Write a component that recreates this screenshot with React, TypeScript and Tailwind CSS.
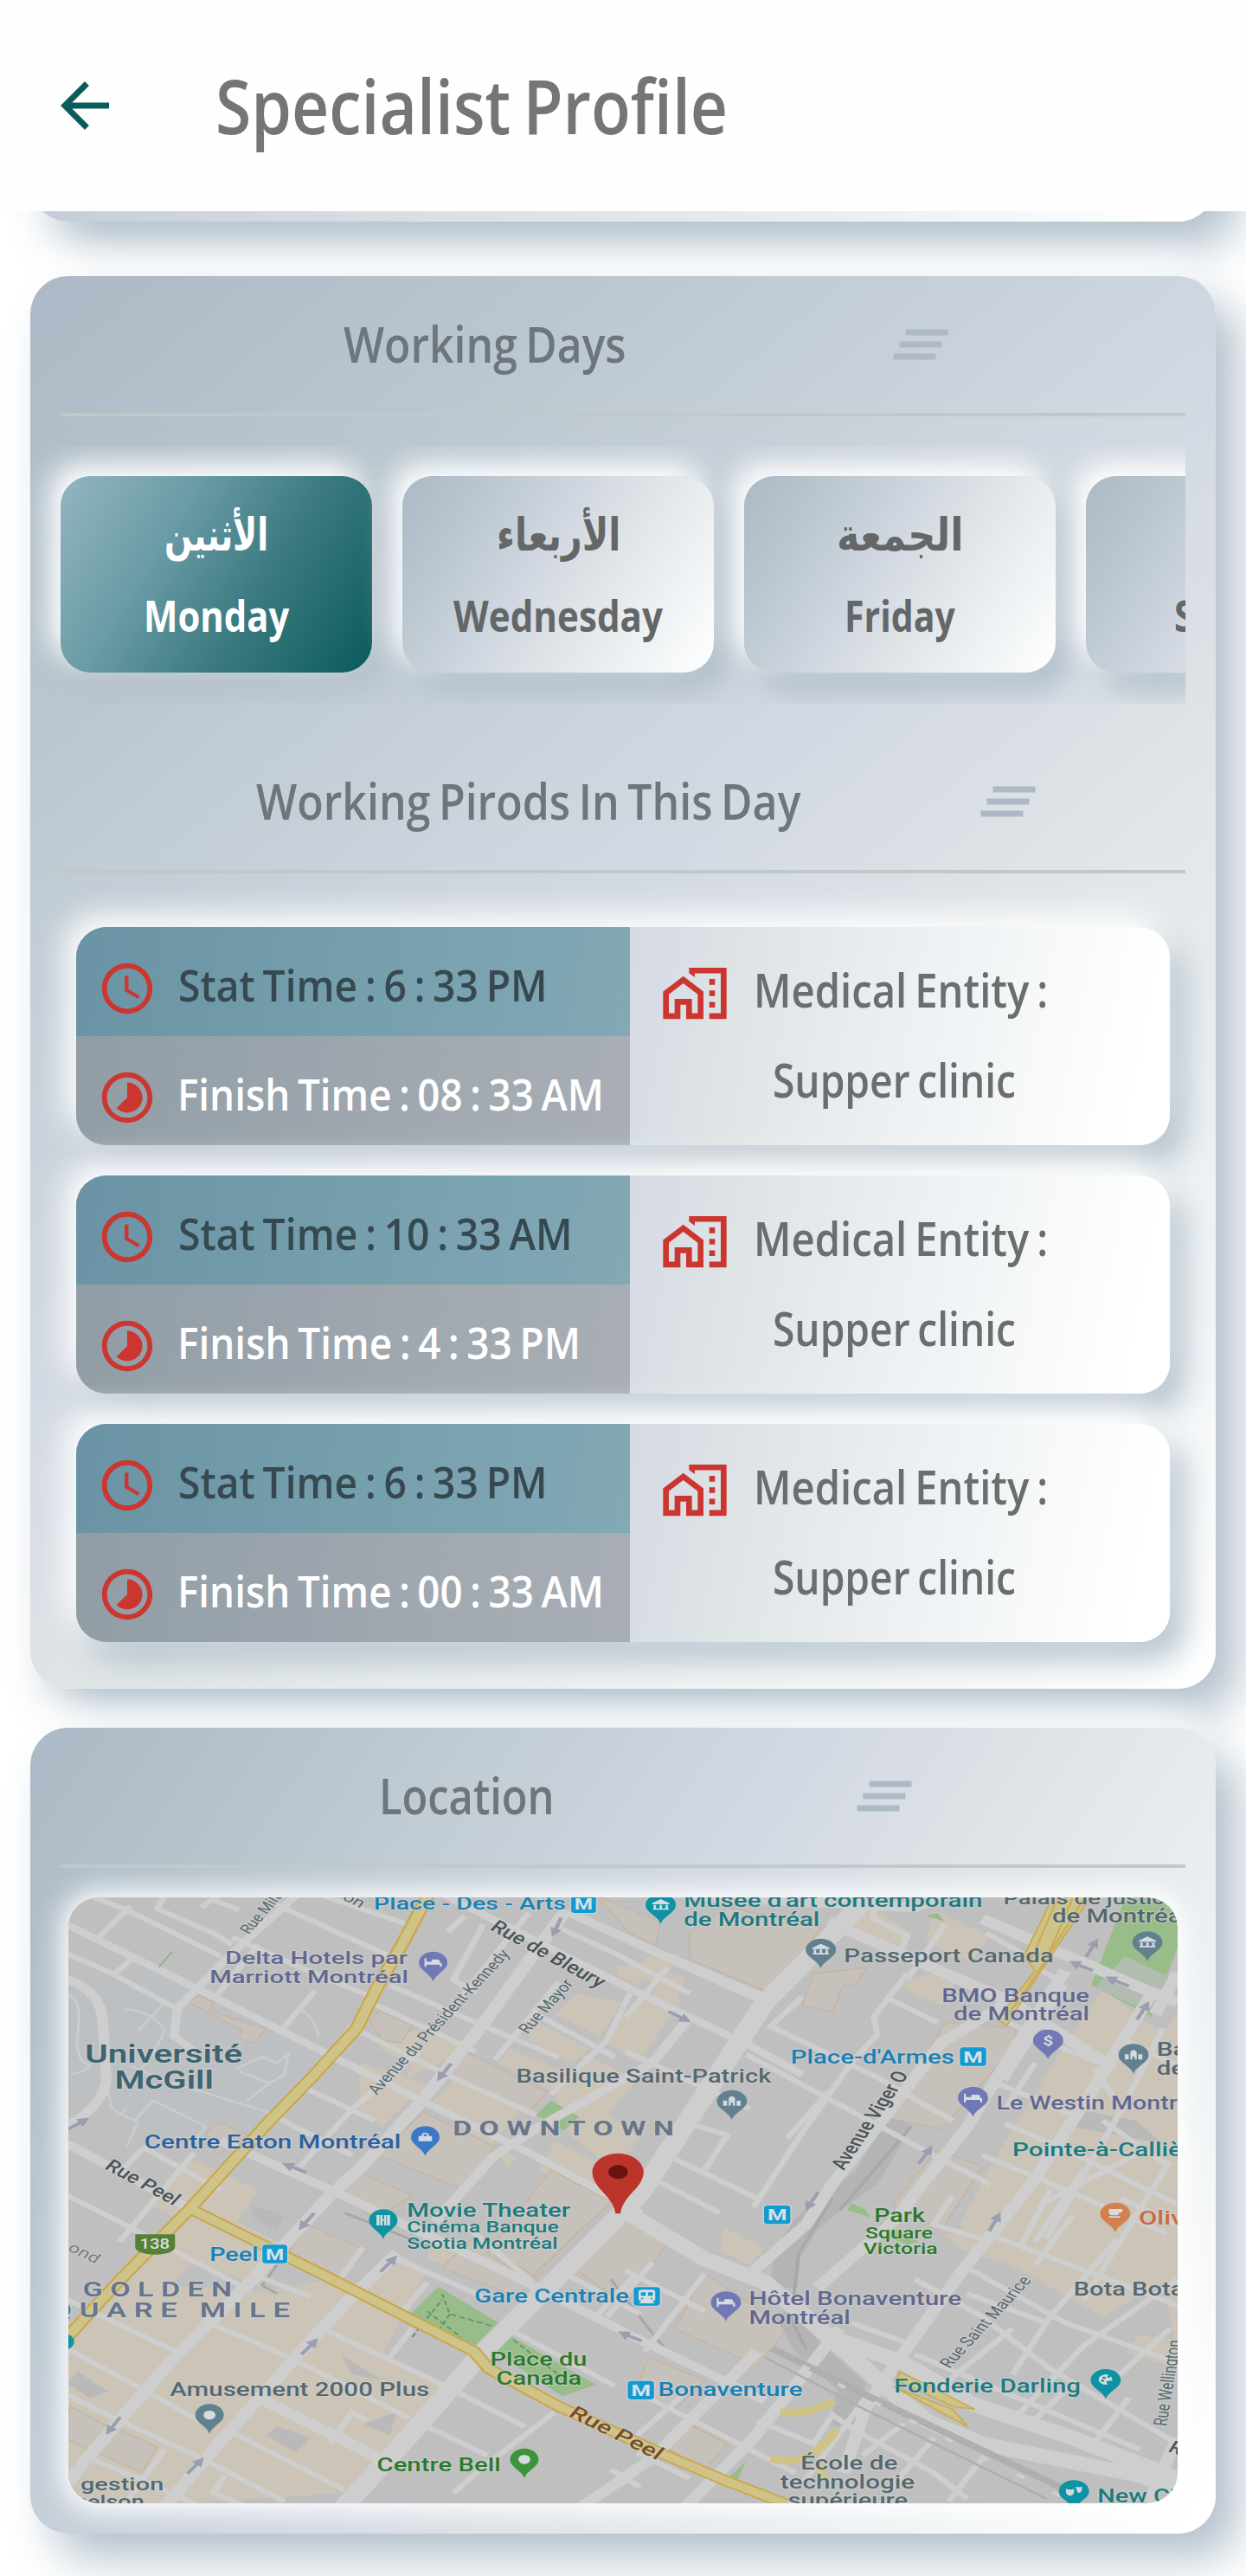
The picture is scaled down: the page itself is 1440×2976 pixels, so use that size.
import { useLayoutEffect, useRef, useState, type ReactNode } from "react";
import { MdAccessTime, MdArrowBack, MdClearAll, MdTimelapse } from "react-icons/md";

/** One line of text, condensed or widened to fill its box. */
function Fit({ className = "", children, rtl = false }: { className?: string; children: ReactNode; rtl?: boolean }) {
  const box = useRef<HTMLDivElement>(null);
  const text = useRef<HTMLSpanElement>(null);
  const [scale, setScale] = useState(1);
  useLayoutEffect(() => {
    const measure = () => {
      if (box.current && text.current) setScale(box.current.clientWidth / text.current.offsetWidth);
    };
    measure();
    document.fonts?.ready.then(measure);
  }, []);
  return (
    <div ref={box} className={"shrink-0 flex justify-start leading-none whitespace-nowrap [word-spacing:-0.07em] " + className}>
      <span ref={text} dir={rtl ? "rtl" : "ltr"} className="inline-block shrink-0 origin-left" style={{ transform: `scaleX(${scale})` }}>
        {children}
      </span>
    </div>
  );
}

function SectionHeader({ title, width, gap, pad }: { title: string; width: string; gap: string; pad: string }) {
  return (
    <div>
      <div className={"flex h-[158px] items-center " + pad}>
        <Fit className={"-mt-[2px] text-[57px] font-semibold text-[#6d757d] " + width}>{title}</Fit>
        <MdClearAll className={"size-[84px] shrink-0 text-[#adbac6] " + gap} />
      </div>
      <div className="h-[4px] bg-[#bfc9c8]" />
    </div>
  );
}

const days = [
  { ar: "الأثنين", en: "Monday", arW: "w-[120px]", enW: "w-[168px]", active: true },
  { ar: "الأربعاء", en: "Wednesday", arW: "w-[143px]", enW: "w-[242px]" },
  { ar: "الجمعة", en: "Friday", arW: "w-[147px]", enW: "w-[128px]" },
  { ar: "الأحد", en: "Sunday", arW: "w-[90px]", enW: "w-[156px]" },
];

function DayCard({ d }: { d: (typeof days)[number] }) {
  return (
    <div
      className={
        "flex h-[227px] w-[360px] shrink-0 flex-col items-center rounded-[35px] pt-[37px] " +
        (d.active
          ? "bg-[linear-gradient(122deg,#93b6bf_0%,#6a9ba6_33%,#3b7a80_62%,#0a5a5a_100%)] text-white shadow-[-12px_-14px_32px_#ffffff,16px_20px_36px_rgba(172,185,198,0.7)]"
          : "bg-[linear-gradient(122deg,#acb9c6_0%,#b8c5ce_18%,#c8d1da_35%,#d6dbe4_49%,#dfe4e6_60%,#edf1f3_78%,#ffffff_100%)] text-[#646668] shadow-[-12px_-14px_32px_#ffffff,16px_20px_36px_#aebdc8]")
      }
    >
      <Fit rtl className={"h-[62px] items-center font-['DejaVu_Sans',sans-serif] text-[52px] font-bold " + d.arW}>{d.ar}</Fit>
      <Fit className={"mt-[37px] text-[50px] font-bold " + d.enW}>{d.en}</Fit>
    </div>
  );
}

function HomeWork() {
  return (
    <svg viewBox="0 0 24 24" preserveAspectRatio="none" className="ml-[2px] h-[79px] w-[80px] shrink-0" fill="#cb3730">
      <path d="M1 11.4v9.6h6v-5h2v5h6v-9.6L8 6l-7 5.4zm12 7.6h-2v-5H5v5H3v-6.6l5-3.9 5 3.9v6.6z" />
      <path d="M10 3v1.97l2 1.43V5h9v14h-4v2h6V3H10z" />
      <path d="M17 7h2v2h-2zm0 4h2v2h-2zm0 4h2v2h-2z" />
    </svg>
  );
}

const periods = [
  { start: "6 : 33 PM", sw: "w-[427px]", finish: "08 : 33 AM", fw: "w-[493px]" },
  { start: "10 : 33 AM", sw: "w-[456px]", finish: "4 : 33 PM", fw: "w-[466px]" },
  { start: "6 : 33 PM", sw: "w-[427px]", finish: "00 : 33 AM", fw: "w-[493px]" },
];

function PeriodCard({ p }: { p: (typeof periods)[number] }) {
  return (
    <div className="rounded-[35px] shadow-[-12px_-14px_36px_#ffffff,16px_20px_36px_#b3c0cc]">
      <div className="flex h-[252px] overflow-hidden rounded-[35px] bg-[linear-gradient(101.3deg,#acb9c6_0%,#c8d1da_35%,#d7dce5_51%,#dfe4e6_60%,#edf1f3_76%,#ffffff_96%)]">
        <div className="w-[640px]">
          <div className="flex h-[126px] items-center bg-[linear-gradient(98deg,#6a94a5_0%,#749eac_45%,#83a8b6_100%)] pl-[24px] pt-[16px]">
            <MdAccessTime className="size-[70px] shrink-0 text-[#cb3730]" />
            <Fit className={"-mt-[8px] ml-[24px] text-[50px] font-semibold text-[#374950] " + p.sw}>Stat Time : {p.start}</Fit>
          </div>
          <div className="flex h-[126px] items-center bg-[linear-gradient(98deg,#919da5_0%,#9ca5ad_45%,#a9aeb6_100%)] pl-[24px] pt-[16px]">
            <MdTimelapse className="size-[70px] shrink-0 text-[#cb3730]" />
            <Fit className={"-mt-[8px] ml-[23px] text-[50px] font-semibold text-white " + p.fw}>Finish Time : {p.finish}</Fit>
          </div>
        </div>
        <div className="flex-1 pl-[33px] pt-[37px] text-[54px] font-semibold text-[#6b6d6e]">
          <div className="flex">
            <HomeWork />
            <Fit className="ml-[28px] mt-[8px] w-[340px]">Medical Entity :</Fit>
          </div>
          <Fit className="ml-[132px] mt-[33px] w-[281px]">Supper clinic</Fit>
        </div>
      </div>
    </div>
  );
}

type L = { x: number; y: number; w: number; s: number; c: string; t: string; r?: number; b?: number };
function Labels({ items }: { items: L[] }) {
  return (
    <>
      {items.map((l, i) => (
        <text
          key={i}
          x={l.x}
          y={l.y}
          fontSize={l.s}
          textLength={l.w}
          lengthAdjust="spacingAndGlyphs"
          fill={l.c}
          fontWeight={l.b ?? 500}
          stroke="#d0d0d0"
          strokeWidth={7}
          strokeOpacity={0.55}
          paintOrder="stroke"
          transform={l.r ? `rotate(${l.r} ${l.x} ${l.y})` : undefined}
        >
          {l.t}
        </text>
      ))}
    </>
  );
}

function Pin({ x, y, c, kind = "dot" }: { x: number; y: number; c: string; kind?: string }) {
  return (
    <g transform={`translate(${x} ${y})`}>
      <path d="M0 66C-6 38-38 28-38 0A38 38 0 0 1 38 0C38 28 6 38 0 66Z" fill={c} />
      <g fill="#d4dcdf" stroke="none">
        {kind === "dot" && <circle r="16" />}
        {kind === "bed" && <path d="M-23-15h5v16h36v-6q0-6-6-6h-16v8h-14v18h-5zM-23 1h46v14h-5V7h-36v8h-5z" />}
        {kind === "museum" && <path d="M-22-6L0-20 22-6v4h-44zM-18 0h6v12h-6zM-3 0h6v12h-6zM12 0h6v12h-6zM-20 12h40v5h-40z" />}
        {kind === "church" && <path d="M-22-2h10v18h-10zM-8-10q8-14 16 0v26h-5V6h-6v10h-5zM12-2h10v18H12z" />}
        {kind === "bag" && <path d="M-18-4h36v18h-36zM-10-4a10 12 0 0 1 20 0h-5a5 7 0 0 0-10 0z" />}
        {kind === "film" && <path d="M-18-18h8v36h-8zM10-18h8v36h-8zM-8-18h6v36h-6zM2-18h6v36H2zM-8-2h16v4H-8z" />}
        {kind === "cup" && <path d="M-16-16h34v12H10q0 10-8 10h-8q-10 0-10-10zM-16 9h28v5h-28z" />}
        {kind === "palette" && <path fillRule="evenodd" d="M0-20a20 18 0 1 0 4 36l-2-12 14-2a20 18 0 0 0-16-22zM-8-8a4 4 0 1 1 0 .1zM4-12a4 4 0 1 1 0 .1zM-12 2a4 4 0 1 1 0 .1z" />}
        {kind === "mask" && <path d="M-20-8q10 6 20 0 2 24-10 24T-20-8zM4-16q8 4 16 0 2 22-10 22z" />}
      </g>
      {kind === "bank" && (
        <text textAnchor="middle" y="16" fontSize="46" fontWeight="700" fill="#d4dcdf">$</text>
      )}
    </g>
  );
}

function Metro({ x, y, train = false }: { x: number; y: number; train?: boolean }) {
  return (
    <g transform={`translate(${x} ${y})`}>
      <rect x="-4" y="-4" width="74" height="72" rx="12" fill="#d2d2d2" opacity="0.7" />
      <rect width="66" height="64" rx="9" fill="#129ad3" />
      {train ? (
        <path fillRule="evenodd" fill="#d8e0e4" d="M20 9h26q8 0 8 8v24q0 6-7 7l6 8H13l6-8q-7-1-7-7V17q0-8 8-8zM18 18v12h12V18zM36 18v12h12V18zM18 37v5h6v-5zM42 37v5h6v-5z" />
      ) : (
        <text x="33" y="52" fontSize="56" fontWeight="700" textAnchor="middle" fill="#d8e0e4">M</text>
      )}
    </g>
  );
}

function Arrow({ x, y, r }: { x: number; y: number; r: number }) {
  return <path transform={`translate(${x} ${y}) rotate(${r})`} d="M-36-5H4V-16L36 0 4 16V5H-36Z" fill="#9b9eb0" />;
}

const slate = "#55686f";
const violet = "#61688f";
const teal = "#1c7b80";
const blue = "#1981b4";
const forest = "#2b7a2a";
const park = "#99bd8a";
const tan = "#cbc4b7";
const rose = "#c7c1bb";

/** Two yellow highways: casing below, fill above. */
const highways = "M1010 40L935 225 870 370 812 520 700 680 570 855 368 1145 190 1380 20 1620M368 1145L740 1385 1125 1640 1165 1700 1350 1830 1610 1985 1790 2085 1960 2170";

function MontrealMap() {
  return (
    <svg viewBox="43.8 66 2956.3 2100" preserveAspectRatio="none" className="block h-[700px] w-[1282px] rounded-[35px]" fontFamily="Roboto, sans-serif">
      <rect x="0" y="0" width="3050" height="2200" fill="#bfbfbf" />
      <path d="M40 390L330 300 740 612 600 830 480 920 240 870 40 730Z" fill="#bcc0c3" />

      {/* commercial areas */}
      <g fill={tan}>
        <path d="M870 590L960 640 940 700 1060 620 1090 580 980 520ZM820 640L930 680 1010 720 960 760 880 860 820 800ZM1080 690L1250 800 1170 930 1010 780ZM1340 470L1460 550 1520 430 1400 400 1360 450ZM1280 490L1430 590 1390 640 1270 560ZM1470 560L1568 400 1680 420 1560 640ZM1220 590L1420 700 1380 770 1190 640ZM1340 760L1420 610 1560 700 1480 820 1568 900 1500 1010 1380 890ZM1500 300L1568 300 1568 370 1510 340Z" />
        <path d="M1340 910L1500 1010 1430 1110 1300 1010ZM1190 940L1240 970 1210 1010ZM370 970L550 1080 470 1240 380 1200 250 1130Z" />
        <path d="M400 1130L620 1270 560 1420 500 1390 380 1330 300 1430 200 1400ZM200 1400L560 1430 740 1390 930 1530 880 1650 1040 1760 890 1980 780 2130 0 2200 0 1600Z" />
        <path d="M940 1310L1000 1360 940 1500 830 1440ZM1010 1220L1150 1310 1080 1350 1000 1320Z" />
        <path d="M1600 260L1680 260 1620 370 1530 330ZM1640 330L1690 340 1640 490 1570 460ZM2130 160L2190 100 2290 190 2240 250ZM2350 110L2500 200 2450 290 2330 220ZM2340 330L2410 360 2370 440 2250 370Z" />
        <path d="M2800 380L2960 540 3000 460 3000 1640 2960 1400 2800 1520 2500 1300 2420 1200 2500 1000 2640 700Z" />
        <path d="M1790 1210L1900 1280 1860 1340 1780 1290ZM2380 1240L2520 1150 2640 1290 2600 1360 2430 1290ZM2900 1580L2999 1600 2999 1700 2860 1640Z" />
      </g>
      <g fill={rose} stroke="#c8b3a0" strokeWidth="4">
        <path d="M390 405L430 430 420 460 570 520 540 570 500 555 505 525 365 430Z" />
        <path d="M870 460L960 510 930 570 880 560 850 500ZM1100 600L1320 740 1270 810 1060 680ZM990 810L1180 930 1100 1080 870 960ZM820 1020L960 1100 860 1180 770 1090ZM450 845L520 890 440 960 410 880Z" />
        <path d="M1450 60L1620 150 1610 230 1540 190ZM1700 190L1800 100 2050 170 1920 400 1700 280ZM2030 330L2170 310 2140 370 2110 370 2080 460 2000 440Z" />
        <path d="M2380 500L2570 520 2560 590 2370 870 2230 830ZM2360 940L2480 1000 2370 1220 2240 1130Z" />
        <path d="M680 1200L840 1290 760 1390 630 1300ZM1120 1250L1290 1380 1240 1450 1040 1350ZM1540 1180L1640 1260 1530 1480 1380 1340ZM1330 1010L1490 1120 1270 1390 1160 1300ZM1740 1370L1960 1560 1880 1690 1660 1560ZM1590 1660L1740 1740 1660 1840 1560 1760ZM180 1910L280 1970 240 2060 120 1990ZM50 1830L150 1900 100 1980 20 1930ZM1680 1880L1800 1960 1740 2050 1620 1960Z" />
      </g>
      <g fill="#b9b9b9">
        <path d="M600 1900L690 1940 650 1990 570 1930ZM830 1890L920 1850 900 1930ZM70 1710L150 1780 100 1800 40 1750ZM770 1650L880 1740 800 1720ZM530 1130L620 1170 600 1220 540 1180ZM2730 800L2890 840 2960 920 2720 860Z" />
      </g>
      <g fill={park}>
        <path d="M1290 820L1330 770 1405 825 1365 875ZM1030 1415L1190 1540 1125 1625 955 1510ZM1220 1585L1450 1755 1360 1795 1180 1640ZM2330 130L2380 150 2360 120ZM2860 70H3000V240L2930 480 2770 370ZM2130 1125L2170 1150 2180 1175 2120 1150ZM2210 1190L2310 1260 2280 1270 2200 1230ZM1800 2080L1850 2020 1830 2080Z" />
      </g>
      <path d="M2860 270L2990 350 2920 460 2780 380Z" fill="#b3bcb0" />
      <path d="M960 1590L1040 1460M1000 1500L1090 1590M1040 1440L1060 1510 1170 1550M1060 1510L1030 1570M1230 1600L1350 1720" stroke="#61956a" strokeWidth="5" strokeDasharray="16 9" fill="none" />

      {/* railway yards */}
      <g fill="none" stroke="#b4b4b4">
        <path d="M2260 840L2170 1040 2080 1120 2010 1200 1960 1300 1950 1420M1960 1500L2010 1620 2130 1760 2110 1900" strokeWidth="72" />
        <path d="M2290 860L2100 1150M2080 1110L1990 1300 1970 1530 2010 1630M1490 1390L1590 1560 1640 1640M780 1160L860 1200 1010 1280M600 1340L560 1410 600 1440" strokeWidth="8" stroke="#a7a7a7" />
      </g>

      {/* minor streets */}
      <g fill="none" stroke="#cecece" strokeWidth="17">
        <path d="M100 60L200 110 450 270M210 95L120 210M300 60L280 105 430 190 480 230M400 100L440 60M420 70L500 110M580 80L900 270M480 205L700 330 860 415M700 50L960 165M740 610L850 430 1130 600M900 370L1130 500 1350 620M820 530L1050 680 1290 820M680 730L860 840M600 830L800 960M1150 160L1070 350 1130 400M1100 130L1055 185M1350 360L1180 630M1270 120L1030 510M980 600L800 800 660 1000M1350 170L1500 260 1700 400M1290 470L1500 620M1540 400L1480 560 1330 750M40 260L160 330 330 450M220 270L160 340M700 390L610 530M550 230L430 420M40 1100L120 1150 500 1410M240 930L450 1080M380 950L180 1260M240 940L180 1020" />
        <path d="M1640 310L1530 480M1530 600L1860 800M1650 270L1920 420M2190 60L2190 140 2280 200 2250 290M2380 160L2280 350M2280 330L2190 480 2200 540 2130 640 1990 900 1870 1140M2220 410L2360 500M2000 410L1910 520M1910 510L2200 690 2400 840M1850 610L2350 960 2500 1060M2070 740L1960 900M1700 850L1800 890 1740 1010M1640 960L1880 1110M1600 1040L1780 1160M2490 190L2600 270M2620 310L2680 350M2520 480L2640 560 2830 660M2500 700L2720 820M2620 640L2540 800M2700 370L2540 700M2780 660L2830 760M2860 560L3000 650M2960 520L2860 780 2650 1250M2540 850L2700 940 3000 1130M2480 960L2650 1050 2970 1230M2800 840L2980 1000M2750 1010L2620 1260M2900 950L2650 1120M2980 980L2750 1460M2850 1110L3000 1200" />
        <path d="M830 1280L760 1400M920 1320L1150 1450M1100 1200L1280 1400M1000 1400L930 1510M960 1560L900 1660M550 1380L690 1450M720 1560L1050 1760M400 1530L650 1670 950 1870M40 1460L330 1640M40 1630L240 1770 420 1900M40 1790L180 1880 400 2010 620 2160M480 1920L780 2120M100 2010L230 2080 400 2180M1000 1900L1160 2000M1080 1780L1260 1900M1230 1570L1500 1760M1340 1850L1160 2030 1070 2130M840 1880L800 1850 740 1960M300 1980L200 2160M460 2070L430 2130 560 2200M1340 1350L1568 1510M1550 1380L1450 1520M1490 2050L1568 2110" />
        <path d="M1600 1330L1480 1520M1530 1360L1740 1500M1740 1370L1580 1640M1640 1640L1900 1810M1700 1770L1560 1930M1590 1800L1830 1960 1980 2060M1560 1990L1700 2080M1880 1880L2030 1960 2080 1860 2150 1920M2150 1920L2350 2060 2440 2150M2180 1780L2000 2100M2350 1940L2230 2120M2480 2010L2390 2160M2270 1890L2160 2000M2300 1390L2480 1520 2660 1700 3000 1960M2130 1540L2300 1620M2300 1650L2500 1760 2900 1980M2440 1350L2700 1540 3000 1680M2510 1240L3000 1480M2720 1170L2620 1340M2840 1250L2660 1520 2560 1720M3000 1390L2750 1620 2560 1880M2660 1080L2580 1280M2720 1750L2600 1900M2870 1800L2760 1990M2980 1560L2820 1750M2440 1440L2650 1540M2390 1740L2560 1560M2400 1100L2350 1200 2480 1250" />
      </g>
      <g fill="none" stroke="#cbcbcb" strokeWidth="7">
        <path d="M195 455Q260 455 300 525 290 570 240 660M300 430L230 530M490 660L560 620 600 640 630 610 620 680 580 710 500 670M590 700L520 770M150 740L160 800 220 840 270 770 410 860 370 930M210 650L300 700 600 820M660 450Q710 500 710 550M40 400Q80 420 70 520T90 640 50 680M200 800L180 820M230 840L200 930" />
      </g>

      {/* principal streets */}
      <g fill="none" stroke="#cecece" strokeLinejoin="round">
        <path d="M40 160L380 378 740 612 1000 780 1270 950 1570 1160M650 60L480 260 335 450 325 545 380 600M1050 60L1568 400 1860 580 2000 680" strokeWidth="24" />
        <path d="M40 350Q130 390 135 490L145 690Q145 780 40 860M40 920L368 1145M450 910L760 1090 1250 1390 1568 1600 1900 1810M1380 120L1600 250 1890 420M1700 480L1600 640 1300 860 1180 960 1020 1190" strokeWidth="28" />
        <path d="M1370 110L1140 520 980 780 825 1000 740 1100 520 1410 320 1670 100 2000 10 2150M920 1300L800 1450 720 1560 540 1820 430 1980 300 2180M550 1800L890 2020M2380 60L2300 100 1700 60M2070 150L2400 340 2560 430 2830 660M2480 140L2920 390 3000 430" strokeWidth="36" />
        <path d="M2180 60L2090 180 1900 430 1810 610 1650 930 1570 1090 1350 1380 1150 1640 940 1950 770 2190" strokeWidth="56" />
        <path d="M2700 320L2580 560 2440 860 2320 1060 2250 1180 2040 1420M2560 420L2370 570 2200 860 2080 1060 2010 1200 1870 1360M2940 380L2760 760 2610 1060 2420 1370 2250 1680 2170 1830 2110 2060M3000 330L2940 470M2100 1560L1870 1940 1680 2190M1880 1640L1600 2010 1400 2190M2999 1940L2930 2140 2940 2190" strokeWidth="34" />
        <path d="M1522 1150L1740 1320 1900 1400 2090 1610 2220 1760 2330 1880 2480 1960 2900 2070 3010 2120M2100 1600L2270 1680 2450 1820 2720 1940 3000 2080" strokeWidth="50" />
      </g>
      <g fill="none" stroke="#adafb1">
        <path d="M1920 1630L2200 1810 2720 2130" strokeWidth="22" />
        <path d="M1900 1660L2150 1830 2650 2150" strokeWidth="8" />
        <path d="M2000 1690L2700 2150" stroke="#cecece" strokeWidth="12" strokeDasharray="22 92" />
      </g>
      <path d={highways} fill="none" stroke="#c9a74c" strokeWidth="38" />
      <path d={highways} fill="none" stroke="#cfc387" strokeWidth="27" />
      <g fill="#cfc387" stroke="#c9ab53" strokeWidth="5">
        <path d="M2670 60H2770L2600 390 2545 510 2520 490 2620 320 2590 270Z" />
        <path d="M2680 70L2610 280M2720 70L2640 310M2750 70L2640 300 2540 490" fill="none" />
        <path d="M2260 1710L2460 1840 2400 1830 2250 1740ZM2240 1760L2400 1840 2440 1900Z" />
      </g>
      <path d="M1940 1850Q2020 1860 2085 1810M2090 1910Q2020 2050 1915 2010M2040 2020L2060 2090" fill="none" stroke="#cfc387" strokeWidth="26" />
      <path d="M320 255L285 308" stroke="#86ad7e" strokeWidth="4" />

      {/* one-way arrows */}
      <Arrow x={1345} y={170} r={110} />
      <Arrow x={1045} y={672} r={122} />
      <Arrow x={645} y={1003} r={207} />
      <Arrow x={70} y={850} r={-35} />
      <Arrow x={678} y={1190} r={125} />
      <Arrow x={898} y={1335} r={-52} />
      <Arrow x={687} y={1622} r={-52} />
      <Arrow x={163} y={1898} r={122} />
      <Arrow x={383} y={2035} r={-52} />
      <Arrow x={1540} y={1587} r={207} />
      <Arrow x={1673} y={480} r={32} />
      <Arrow x={2772} y={240} r={-63} />
      <Arrow x={2742} y={303} r={207} />
      <Arrow x={2838} y={357} r={207} />
      <Arrow x={2908} y={458} r={-63} />
      <Arrow x={2328} y={958} r={-60} />
      <Arrow x={2025} y={1120} r={118} />
      <Arrow x={2513} y={1190} r={-65} />

      <Labels
        items={[
          { x: 525, y: 196, w: 205, s: 46, c: slate, t: "Rue Milton", r: -56, b: 400 },
          { x: 772, y: 72, w: 60, s: 46, c: slate, t: "on", r: 32, b: 400 },
          { x: 858, y: 108, w: 512, s: 62, c: blue, t: "Place - Des - Arts" },
          { x: 462, y: 298, w: 486, s: 63, c: violet, t: "Delta Hotels par" },
          { x: 420, y: 362, w: 530, s: 63, c: violet, t: "Marriott Montréal" },
          { x: 88, y: 638, w: 420, s: 86, c: "#3e6470", t: "Université", b: 600 },
          { x: 167, y: 729, w: 264, s: 86, c: "#3e6470", t: "McGill", b: 600 },
          { x: 866, y: 752, w: 605, s: 48, c: slate, t: "Avenue du Président-Kennedy", r: -54, b: 400 },
          { x: 1165, y: 176, w: 358, s: 60, c: "#4b5457", t: "Rue de Bleury", r: 35 },
          { x: 1268, y: 541, w: 215, s: 48, c: slate, t: "Rue Mayor", r: -55, b: 400 },
          { x: 1237, y: 708, w: 680, s: 65, c: slate, t: "Basilique Saint-Patrick" },
          { x: 246, y: 936, w: 684, s: 64, c: "#2c619e", t: "Centre Eaton Montréal" },
          { x: 1068, y: 892, w: 590, s: 74, c: "#6b7587", t: "D\u00a0O\u00a0W\u00a0N\u00a0T\u00a0O\u00a0W\u00a0N", b: 700 },
          { x: 138, y: 1004, w: 228, s: 58, c: "#4b5457", t: "Rue Peel", r: 35 },
          { x: 946, y: 1172, w: 436, s: 66, c: teal, t: "Movie Theater" },
          { x: 946, y: 1228, w: 405, s: 56, c: teal, t: "Cinéma Banque" },
          { x: 946, y: 1284, w: 402, s: 56, c: teal, t: "Scotia Montréal" },
          { x: 420, y: 1325, w: 130, s: 64, c: blue, t: "Peel" },
          { x: 40, y: 1288, w: 90, s: 48, c: "#777d80", t: "ond", r: 32, b: 400 },
          { x: 82, y: 1448, w: 398, s: 74, c: "#66758c", t: "G\u00a0O\u00a0L\u00a0D\u00a0E\u00a0N", b: 600 },
          { x: -2, y: 1522, w: 636, s: 74, c: "#66758c", t: "Q\u00a0U\u00a0A\u00a0R\u00a0E\u00a0\u00a0\u00a0M\u00a0I\u00a0L\u00a0E", b: 600 },
          { x: 1126, y: 1470, w: 412, s: 65, c: blue, t: "Gare Centrale" },
          { x: 1168, y: 1690, w: 258, s: 66, c: forest, t: "Place du" },
          { x: 1184, y: 1756, w: 228, s: 66, c: forest, t: "Canada" },
          { x: 314, y: 1795, w: 692, s: 64, c: slate, t: "Amusement 2000 Plus" },
          { x: 1374, y: 1862, w: 285, s: 62, c: "#785020", t: "Rue Peel", r: 33 },
          { x: 866, y: 2055, w: 330, s: 66, c: forest, t: "Centre Bell" },
          { x: 76, y: 2120, w: 222, s: 62, c: slate, t: "gestion" },
          { x: 60, y: 2182, w: 186, s: 62, c: slate, t: "nelson" },
        ]}
      />
      <Metro x={1384} y={56} />
      <Pin x={1016} y={292} c="#7078b6" kind="bed" />
      <Pin x={995} y={897} c="#3b79c8" kind="bag" />
      <Pin x={883} y={1185} c="#0e93a4" kind="film" />
      <Pin x={420} y={1860} c="#62818f" />
      <Pin x={1259} y={2014} c="#3d953b" />
      <circle cx="30" cy="1606" r="29" fill="#0e93a4" />
      <path d="M222 1234H328V1280Q322 1302 275 1304 228 1302 222 1280Z" fill="#558136" />
      <text x="234" y="1285" fontSize="47" fontWeight="500" textLength="80" lengthAdjust="spacingAndGlyphs" fill="#dedede">138</text>
      <Metro x={561} y={1270} />

      {/* eastern half */}
      <g transform="translate(1522 0) scale(1.0588 1)">
        <Labels
          items={[
            { x: 153, y: 98, w: 752, s: 64, c: teal, t: "Musée d'art contemporain" },
            { x: 153, y: 164, w: 342, s: 64, c: teal, t: "de Montréal" },
            { x: 957, y: 90, w: 438, s: 62, c: slate, t: "Palais de justice" },
            { x: 1080, y: 153, w: 342, s: 64, c: slate, t: "de Montréal" },
            { x: 556, y: 290, w: 528, s: 66, c: slate, t: "Passeport Canada" },
            { x: 802, y: 428, w: 372, s: 65, c: violet, t: "BMO Banque" },
            { x: 832, y: 493, w: 342, s: 65, c: violet, t: "de Montréal" },
            { x: 422, y: 642, w: 412, s: 65, c: blue, t: "Place-d'Armes" },
            { x: 556, y: 1014, w: 372, s: 56, c: "#4b5457", t: "Avenue Viger O", r: -64 },
            { x: 940, y: 802, w: 538, s: 65, c: violet, t: "Le Westin Montréal" },
            { x: 980, y: 962, w: 484, s: 65, c: teal, t: "Pointe-à-Callière" },
            { x: 1343, y: 616, w: 220, s: 64, c: slate, t: "Banque" },
            { x: 1343, y: 682, w: 342, s: 64, c: slate, t: "de Montréal" },
            { x: 632, y: 1108 + 1, w: 1, s: 1, c: forest, t: "" },
            { x: 632, y: 1190, w: 128, s: 66, c: forest, t: "Park" },
            { x: 610, y: 1248, w: 170, s: 56, c: forest, t: "Square" },
            { x: 605, y: 1303, w: 187, s: 56, c: forest, t: "Victoria" },
            { x: 1298, y: 1200, w: 150, s: 65, c: "#c96b41", t: "Olive" },
            { x: 1134, y: 1446, w: 278, s: 66, c: slate, t: "Bota Bota" },
            { x: 317, y: 1480, w: 535, s: 65, c: violet, t: "Hôtel Bonaventure" },
            { x: 317, y: 1545, w: 255, s: 65, c: violet, t: "Montréal" },
            { x: 822, y: 1700, w: 370, s: 48, c: slate, t: "Rue Saint Maurice", r: -56, b: 400 },
            { x: 1368, y: 1900, w: 300, s: 48, c: slate, t: "Rue Wellington", r: -83, b: 400 },
            { x: 88, y: 1795, w: 364, s: 65, c: blue, t: "Bonaventure" },
            { x: 682, y: 1781, w: 470, s: 65, c: teal, t: "Fonderie Darling" },
            { x: 447, y: 2050, w: 244, s: 66, c: slate, t: "École de" },
            { x: 396, y: 2115, w: 338, s: 66, c: slate, t: "technologie" },
            { x: 415, y: 2178, w: 302, s: 66, c: slate, t: "supérieure" },
            { x: 1194, y: 2162, w: 250, s: 64, c: teal, t: "New City" },
            { x: 1370, y: 1985, w: 60, s: 58, c: "#4b5457", t: "Ru", r: 25 },
          ].filter((l) => l.t)}
        />
        <Pin x={95} y={92} c="#0e93a4" kind="museum" />
        <Pin x={498} y={247} c="#62818f" kind="museum" />
        <Pin x={1320} y={222} c="#62818f" kind="museum" />
        <Pin x={1070} y={562} c="#7078b6" kind="bank" />
        <Pin x={1285} y={612} c="#62818f" kind="church" />
        <Pin x={274} y={772} c="#62818f" kind="church" />
        <Pin x={881} y={761} c="#7078b6" kind="bed" />
        <Pin x={1239} y={1162} c="#d3804f" kind="cup" />
        <Pin x={259} y={1470} c="#7078b6" kind="bed" />
        <Pin x={1215} y={1739} c="#0e93a4" kind="palette" />
        <Pin x={1135} y={2124} c="#0e93a4" kind="mask" />
        <Metro x={848} y={586} />
        <Metro x={355} y={1134} />
        <Metro x={27} y={1417} train />
        <Metro x={12} y={1742} />
      </g>

      {/* clinic marker */}
      <path d="M1502 1162Q1500 1130 1470 1090 1440 1050 1440 1020A68 66 0 0 1 1577 1020Q1577 1050 1546 1090 1517 1130 1515 1162Z" fill="#bc352b" />
      <ellipse cx="1509" cy="1018" rx="26" ry="24" fill="#6b120e" />
    </svg>
  );
}

export default function App() {
  return (
    <div className="flex h-[2976px] w-[1440px] flex-col overflow-hidden bg-white font-['Open_Sans',sans-serif]">
      <header className="relative z-10 flex h-[244px] shrink-0 items-center bg-[#fefefe] pl-[56px]">
        <MdArrowBack className="size-[84px] text-[#0a5c5c]" />
        <Fit className="-mt-[2px] ml-[109px] w-[592px] text-[87px] font-semibold text-[#757575]">Specialist Profile</Fit>
      </header>

      <div className="mx-[35px] -mt-[188px] h-[200px] shrink-0 rounded-[44px] bg-[linear-gradient(98deg,#c3ccd6_0%,#d8dde4_30%,#e8ecee_65%,#ffffff_96%)] shadow-[26px_28px_54px_#afbeca,-16px_-16px_36px_#ffffff]" />

      <section className="mx-[35px] mt-[63px] h-[1632px] shrink-0 rounded-[44px] bg-[linear-gradient(140deg,#acb9c6_0%,#b8c5ce_17%,#c8d1da_34%,#d8dde6_52%,#dfe4e6_60%,#edf1f3_78%,#ffffff_100%)] px-[35px] shadow-[26px_28px_54px_#b1bfcb,-16px_-16px_36px_#ffffff]">
        <SectionHeader title="Working Days" pad="pl-[327px]" width="w-[327px]" gap="ml-[298px]" />
        <div className="-ml-[35px] mt-[34px] flex h-[298px] gap-[35px] overflow-hidden pl-[35px] pt-[35px]">
          {days.map((d) => (
            <DayCard key={d.en} d={d} />
          ))}
        </div>
        <div className="mt-[34px]">
          <SectionHeader title="Working Pirods In This Day" pad="pl-[226px]" width="w-[629px]" gap="ml-[198px]" />
        </div>
        <div className="mx-[18px] mt-[62px] flex flex-col gap-[35px]">
          {periods.map((p, i) => (
            <PeriodCard key={i} p={p} />
          ))}
        </div>
      </section>

      <section className="mx-[35px] mt-[45px] h-[931px] shrink-0 rounded-[44px] bg-[linear-gradient(124.2deg,#acb9c6_0%,#b8c5ce_17%,#c8d1da_34%,#d8dde6_52%,#dfe4e6_60%,#edf1f3_78%,#ffffff_98%)] px-[35px] shadow-[26px_28px_54px_#b1bfcb,-16px_-16px_36px_#ffffff]">
        <SectionHeader title="Location" pad="pl-[368px]" width="w-[203px]" gap="ml-[339px]" />
        <div className="mx-[9px] mt-[34px] w-[1282px] overflow-hidden rounded-[35px] shadow-[0px_0px_30px_8px_#ffffff]">
          <MontrealMap />
        </div>
      </section>
    </div>
  );
}
